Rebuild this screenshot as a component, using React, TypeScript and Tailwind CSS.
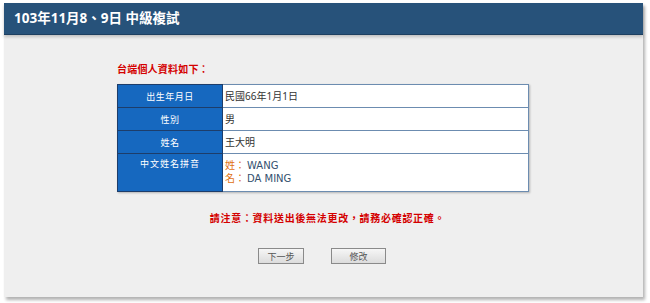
import React from "react";

export default function App() {
  const font = { fontFamily: '"Noto Sans", "Noto Sans CJK TC", sans-serif' };
  const latin = { fontFamily: '"DejaVu Sans", "Noto Sans CJK TC", sans-serif' };
  return (
    <div className="w-[650px] h-[303px] bg-white pt-[3px] pl-[4px]" style={font}>
      <div className="w-[639px] h-[294px] bg-[#efefef] shadow-[2px_3px_3px_rgba(0,0,0,0.3)] flex flex-col">
        <div className="h-[32px] bg-[#27527a] border-b border-[#1d3f60] flex items-center pl-[10px] shadow-[0_2px_3px_rgba(0,0,0,0.2)]">
          <span className="text-white font-bold text-[13.5px] leading-none">103年11月8、9日 中級複試</span>
        </div>
        <div className="pl-[113px] pt-[29px]">
          <div className="text-[#d40000] text-[10px] font-bold leading-none tracking-[0.2px]">台端個人資料如下：</div>
          <table className="mt-[10px] w-[412px] border-collapse shadow-[1px_1px_2px_rgba(0,0,0,0.25)]">
            <tbody>
              {[
                ["出生年月日", "民國66年1月1日"],
                ["性別", "男"],
                ["姓名", "王大明"],
              ].map(([k, v]) => (
                <tr key={k} className="h-[23px]">
                  <td className="w-[105px] bg-[#1668bf] text-white text-center border border-[#1d3d6a] leading-none text-[9px] tracking-[0.5px]">{k}</td>
                  <td className="bg-white border border-[#6c8cb0] pl-[2px] text-[#333] leading-none text-[10px]">{v}</td>
                </tr>
              ))}
              <tr className="h-[38px]">
                <td className="w-[105px] bg-[#1668bf] text-white text-center border border-[#1d3d6a] align-top pt-[5px] leading-none text-[9px] tracking-[1px]">中文姓名拼音</td>
                <td className="bg-white border border-[#6c8cb0] pl-[2px] align-top pt-[5px] text-[10px] leading-[13px]">
                  <div><span className="text-[#e07010]">姓：</span><span className="text-[#33506e] ml-[2px]" style={latin}>WANG</span></div>
                  <div><span className="text-[#e07010]">名：</span><span className="text-[#33506e] ml-[2px]" style={latin}>DA MING</span></div>
                </td>
              </tr>
            </tbody>
          </table>
        </div>
        <div className="text-center text-[#d40000] text-[10px] font-bold leading-none mt-[21px] tracking-[0.7px] pl-[8px]">請注意：資料送出後無法更改，請務必確認正確。</div>
        <div className="flex justify-center gap-[27px] mt-[25px] pr-[3px]">
          <button className="w-[46px] h-[16px] bg-gradient-to-b from-[#f6f6f6] to-[#dcdcdc] border border-[#8a8a8a] text-[9px] text-[#555] leading-none">下一步</button>
          <button className="w-[55px] h-[16px] bg-gradient-to-b from-[#f6f6f6] to-[#dcdcdc] border border-[#8a8a8a] text-[9px] text-[#555] leading-none">修改</button>
        </div>
      </div>
    </div>
  );
}
